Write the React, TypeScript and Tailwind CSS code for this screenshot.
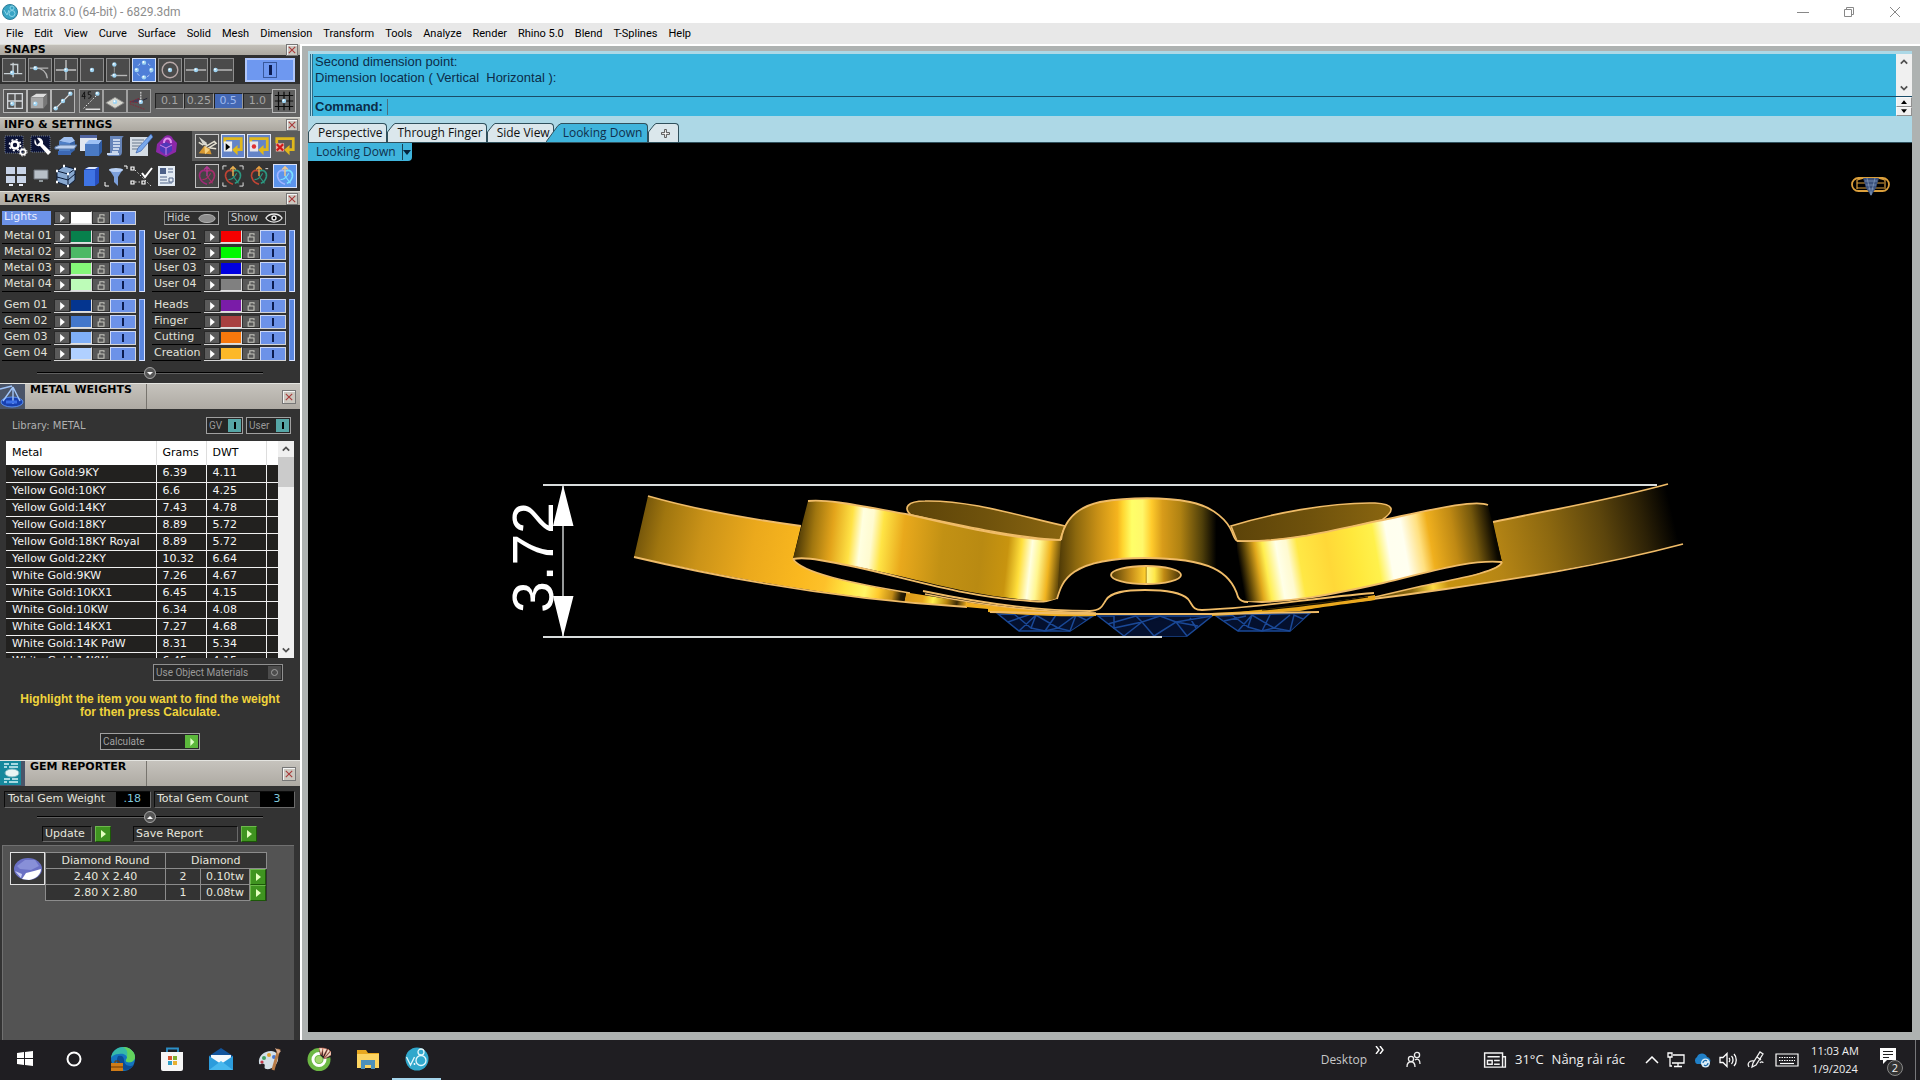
import { useState } from 'react'
import type { ReactNode } from 'react'

const MENUS = [
  'File', 'Edit', 'View', 'Curve', 'Surface', 'Solid', 'Mesh', 'Dimension', 'Transform', 'Tools',
  'Analyze', 'Render', 'Rhino 5.0', 'Blend', 'T-Splines', 'Help',
]

const METALS = [
  ['Yellow Gold:9KY', '6.39', '4.11'],
  ['Yellow Gold:10KY', '6.6', '4.25'],
  ['Yellow Gold:14KY', '7.43', '4.78'],
  ['Yellow Gold:18KY', '8.89', '5.72'],
  ['Yellow Gold:18KY Royal', '8.89', '5.72'],
  ['Yellow Gold:22KY', '10.32', '6.64'],
  ['White Gold:9KW', '7.26', '4.67'],
  ['White Gold:10KX1', '6.45', '4.15'],
  ['White Gold:10KW', '6.34', '4.08'],
  ['White Gold:14KX1', '7.27', '4.68'],
  ['White Gold:14K PdW', '8.31', '5.34'],
  ['White Gold:14KW', '6.45', '4.15'],
]

type LayerItem = { name: string; color: string }

const LAYERS: Record<'metal' | 'user' | 'gem' | 'parts', LayerItem[]> = {
  metal: [
    { name: 'Metal 01', color: 'bg-[#07804c]' },
    { name: 'Metal 02', color: 'bg-[#4cb965]' },
    { name: 'Metal 03', color: 'bg-[#84f878]' },
    { name: 'Metal 04', color: 'bg-[#bdfcb8]' },
  ],
  user: [
    { name: 'User 01', color: 'bg-[#f60000]' },
    { name: 'User 02', color: 'bg-[#00f800]' },
    { name: 'User 03', color: 'bg-[#0000e0]' },
    { name: 'User 04', color: 'bg-[#808080]' },
  ],
  gem: [
    { name: 'Gem 01', color: 'bg-[#04358f]' },
    { name: 'Gem 02', color: 'bg-[#4377cb]' },
    { name: 'Gem 03', color: 'bg-[#80b0f8]' },
    { name: 'Gem 04', color: 'bg-[#b0d0ff]' },
  ],
  parts: [
    { name: 'Heads', color: 'bg-[#7a1ca8]' },
    { name: 'Finger', color: 'bg-[#a84040]' },
    { name: 'Cutting', color: 'bg-[#f8780c]' },
    { name: 'Creation', color: 'bg-[#fcb828]' },
  ],
}

function Icon({ children, className = 'h-6 w-6' }: { children: ReactNode; className?: string }) {
  return (
    <svg viewBox="0 0 24 24" className={`shrink-0 ${className}`} fill="none" aria-hidden="true">
      {children}
    </svg>
  )
}

function Dot({ x, y }: { x: number; y: number }) {
  return (
    <g>
      <circle cx={x} cy={y} r="2.4" fill="#9fd4f2" />
      <circle cx={x - 0.6} cy={y - 0.7} r="1" fill="#fff" />
    </g>
  )
}

const SNAPS = [
  {
    label: 'Perpendicular',
    art: <><path d="M1 16h20M11 4v16M8 6h8v10" stroke="#c8d0d4" strokeWidth="1.5" /><Dot x={10} y={15} /></>,
  },
  {
    label: 'Tangent',
    art: <><path d="M1 10h20M7 10c7 0 12 4 13 11" stroke="#b4b4b4" strokeWidth="1.5" /><Dot x={7} y={10} /></>,
  },
  {
    label: 'Intersection',
    art: <><path d="M1 12h22M12 1v22" stroke="#c4c4c4" strokeWidth="1.5" /><Dot x={12} y={12} /></>,
  },
  { label: 'Point', art: <Dot x={12} y={12} /> },
  {
    label: 'Near',
    art: <><path d="M4 18h18" stroke="#b8b8b8" strokeWidth="1.5" /><path d="M8 9v6" stroke="#999" /><Dot x={8} y={6} /><Dot x={8} y={18} /></>,
  },
  {
    label: 'Quadrant',
    art: <><circle cx="12" cy="12" r="8" stroke="#c8d8f8" strokeDasharray="3 3" /><Dot x={12} y={4} /><Dot x={12} y={20} /><Dot x={4} y={12} /><Dot x={20} y={12} /></>,
  },
  {
    label: 'Center',
    art: <><circle cx="12" cy="12" r="8.500" stroke="#b8a8a8" strokeWidth="1.5" /><Dot x={12} y={12} /></>,
  },
  {
    label: 'Midpoint',
    art: <><path d="M1 12h22" stroke="#c4c4c4" strokeWidth="1.5" /><Dot x={12} y={12} /></>,
  },
  {
    label: 'End',
    art: <><path d="M4 12h19" stroke="#c4c4c4" strokeWidth="1.5" /><Dot x={5} y={12} /></>,
  },
]

const PLANE_SNAPS = [
  {
    label: 'Grid',
    art: <><path d="M4 4h16v16H4zM12 4v16M4 12h16" stroke="#d4d8dc" strokeWidth="1.4" /><Dot x={9} y={15} /></>,
  },
  {
    label: 'Surface',
    art: <><path d="M3 8l6-4h12l-4 4z" fill="#ddd" /><path d="M3 8h14v12H3z" fill="#a6a6a6" /><path d="M17 8l4-4v11l-4 5z" fill="#777" /><Dot x={8} y={15} /></>,
  },
  {
    label: 'Curve',
    art: <><path d="M4 20L20 4" stroke="#ddd" strokeWidth="1.4" /><Dot x={4} y={20} /><Dot x={12} y={12} /><Dot x={20} y={4} /></>,
  },
]

const ANGLE_SNAPS = [
  {
    label: 'Angle',
    art: (
      <>
        <path d="M4 20L19 5" stroke="#fff" strokeDasharray="1.5 2" />
        <path d="M6 21h16" stroke="#e8e8e8" strokeWidth="1.5" />
        <path d="M5 2L2 7h4M5 2v8M12 2H9v3c4-1 4 4 0 4" stroke="#111" />
        <Dot x={19} y={4} />
      </>
    ),
  },
  {
    label: 'Planar',
    art: <><path d="M2 14l10-6 10 6-10 6z" fill="#d8d8d0" stroke="#888" /><Dot x={12} y={13} /></>,
  },
  {
    label: 'Project',
    art: (
      <>
        <path d="M2 13l10-4v5zM2 15l16 6" fill="#404058" stroke="#852838" strokeDasharray="2 1" />
        <path d="M14 2v10" stroke="#fff" strokeDasharray="2 1" />
        <path d="M12 13l9-4" stroke="#202030" />
        <Dot x={14} y={13} />
      </>
    ),
  },
]

const INFO_TOP = [
  {
    label: 'Options',
    art: (
      <>
        <path d="M1 2h18v17H1z" fill="#0b1234" stroke="#8090b0" strokeWidth="0.8" strokeDasharray="1 1" />
        <circle cx="11" cy="11" r="3.500" stroke="#fff" strokeWidth="2.6" />
        <circle cx="11" cy="11" r="5.600" stroke="#fff" strokeWidth="1.6" strokeDasharray="2 2.4" />
        <circle cx="19" cy="18" r="2.600" stroke="#fff" strokeWidth="1.6" />
        <circle cx="19" cy="18" r="4" stroke="#fff" strokeWidth="1" strokeDasharray="1.6 1.6" />
      </>
    ),
  },
  {
    label: 'Tools',
    art: (
      <>
        <path d="M2 2h19v16H2z" fill="#0b1234" stroke="#8090b0" strokeWidth="0.8" strokeDasharray="1 1" />
        <path d="M6 5c-2 4 1 8 5 7l8 9 3-3-8-8c1-4-3-7-6-6l3 4-3 3z" fill="#fff" />
      </>
    ),
  },
  {
    label: 'Section',
    art: (
      <>
        <path d="M5 7l5-4h8l3 4-5 3z" fill="#a0c0f0" />
        <path d="M5 7l11 2v9H5z" fill="#4f80c8" />
        <path d="M16 9l5-2v9l-5 4z" fill="#3562a8" />
        <path d="M1 13l5-2h17l-3 4H1z" fill="#bcd0ee" stroke="#5878a8" />
        <path d="M4 17h13v4H4z" fill="#3c68b4" />
      </>
    ),
  },
  {
    label: 'Properties',
    art: (
      <>
        <path d="M1 1h17v16H1z" fill="#e0e6f0" />
        <path d="M1 1h17v3H1z" fill="#5064a0" />
        <path d="M6 10l4-4h13l-3 4z" fill="#9cc0f4" />
        <path d="M6 10h14v12H6z" fill="#4a7ac4" />
        <path d="M20 10l3-4v12l-3 4z" fill="#2f5ca4" />
      </>
    ),
  },
  {
    label: 'History',
    art: (
      <>
        <path d="M6 2h14c-2 1-2 2-2 4v12c0 3-2 4-4 4H3c2-1 3-2 3-4z" fill="#6684b8" />
        <path d="M9 6h7M9 9h7M9 12h7M9 15h6M8 18h6" stroke="#e8f0fc" strokeWidth="1.4" />
        <path d="M3 20h12" stroke="#c8d8f0" strokeWidth="2" />
      </>
    ),
  },
  {
    label: 'Notes',
    art: (
      <>
        <path d="M1 3h18v19H1z" fill="#d4dce4" />
        <path d="M3 6h12M3 9h10M3 12h8M3 15h6" stroke="#68788c" />
        <path d="M22 0l2 3L12 17l-5 2 2-5z" fill="#78a8ec" stroke="#2850a0" strokeWidth="0.6" />
      </>
    ),
  },
  {
    label: 'Materials',
    art: (
      <>
        <path d="M10 3c3-3 8-2 9 2l4 4-1 9-10 5-10-5 1-8z" fill="#8c28a8" />
        <path d="M6 11l6-3 6 3v6l-6 4-6-4z" fill="#5038b8" />
        <path d="M6 11l6 3 6-3M12 14v7" stroke="#d080e8" />
        <path d="M10 9c0-6 7-6 7 0" stroke="#e090f0" strokeWidth="2" />
      </>
    ),
  },
]

const INFO_BOTTOM = [
  {
    label: 'Viewports',
    art: <><path d="M2 3h9v7H2zM13 3h9v7h-9zM2 12h9v7H2zM13 12h9v7h-9z" fill="#c8d4e8" /><path d="M5 21h4M15 21h4" stroke="#e8ecf4" strokeWidth="2" /></>,
  },
  {
    label: 'Display',
    art: <><path d="M5 6h14v9H5z" fill="#b8c0c8" stroke="#6a7078" /><path d="M10 16h4v2h-4z" fill="#90989c" /></>,
  },
  {
    label: 'Bounding box',
    art: (
      <>
        <path d="M3 7l7-5 11 3v11l-7 6-11-4z" fill="#88a8d0" />
        <path d="M3 7l11 3 7-5M14 10v12M3 7v11M3 7l7-5 11 3v11l-7 6-11-4M3 13l11 3 7-6" stroke="#0c1c38" />
        <path d="M2 7h2M9 2h2M20 5h2M13 22h2M2 18h2M13 10h2" stroke="#fff" strokeWidth="2.4" />
      </>
    ),
  },
  {
    label: 'Library',
    art: <><path d="M5 6l4-3h11v16l-4 3H5z" fill="#274fc0" /><path d="M5 6h11v16H5z" fill="#3f74e4" /><path d="M6 5l4-2h9l-3 2z" fill="#dce8fc" /></>,
  },
  {
    label: 'Filter',
    art: (
      <>
        <path d="M5 5h14l-5 8v9l-4-4v-5z" fill="#7ca0dc" />
        <ellipse cx="12" cy="6" rx="7" ry="2" fill="#b8d0f4" />
        <path d="M20 2h3v3M1 18v4h4" stroke="#fff" />
      </>
    ),
  },
  {
    label: 'Points',
    art: (
      <>
        <path d="M2 3h3v3H2zM2 17h3v3H2zM13 17h3v3h-3z" stroke="#fff" strokeWidth="1.2" />
        <path d="M6 6l16 16M6 18h6" stroke="#ddd" strokeDasharray="1.5 2" />
        <path d="M13 9l3 4 7-9" stroke="#fff" strokeWidth="2" />
      </>
    ),
  },
  {
    label: 'Report',
    art: <><path d="M4 2h17v20H4z" fill="#e4ecf4" /><path d="M6 4h6v6H6z" fill="#4c6088" /><path d="M14 5h5M14 8h5M6 13h7M6 16h7M6 19h12M15 14h4v4h-4z" stroke="#54688c" /></>,
  },
]

function loopArt(mark: ReactNode) {
  return (
    <>
      <path d="M3 9V4h18v12h-6" stroke="#e0b81c" strokeWidth="3" />
      <path d="M17 11l-6 5 6 6z" fill="#e0b81c" />
      {mark}
    </>
  )
}

const REPORT_TOOLS = [
  {
    label: 'Wireframe wizard',
    box: 'border-[#c8c8c8] bg-[#4a4a4a]',
    art: (
      <>
        <path d="M3 2l8 6 2 4-5-1z" fill="#d8d8d0" />
        <path d="M3 8l5 3M10 13l10-6 2 2-8 5 8 1" stroke="#e4e0d0" strokeWidth="1.6" />
        <path d="M3 20l6-8 6 3 2 6z" fill="#d89830" />
        <path d="M9 12l6 4-5 5z" fill="#f4d080" />
      </>
    ),
  },
  { label: 'Play loop', box: 'border-[#e0e8f8] bg-[#6484c8]', art: loopArt(<><path d="M2 7h9v11H2z" fill="#eee" /><path d="M4 9l5 4-5 4z" fill="#000" /></>) },
  { label: 'Record loop', box: 'border-[#e0e8f8] bg-[#6484c8]', art: loopArt(<><path d="M2 7h9v11H2z" fill="#e4e4ec" /><circle cx="6.500" cy="12.500" r="2.400" fill="#e03030" /></>) },
  { label: 'Stop loop', box: 'border-transparent', art: loopArt(<><path d="M2 9h9v9H2z" fill="#e8b0a0" /><path d="M3 10l7 7M10 10l-7 7" stroke="#d01818" strokeWidth="2.4" /></>) },
]

function gumballArt(left: string, right: string, arrow: string) {
  return (
    <>
      <path d="M12 7c-5-3-9 1-8 6 1 4 4 7 8 8" stroke={left} strokeWidth="1.8" />
      <path d="M12 7c5-3 9 1 8 6-1 4-3 6-6 7" stroke={right} strokeWidth="1.8" />
      <path d="M7 16c4 0 7-3 9-7M12 12l6 8" stroke={right} strokeWidth="1.2" />
      <path d="M12 12V3M9 5l3-3 3 3" stroke={arrow} strokeWidth="1.6" />
    </>
  )
}

const GUMBALLS = [
  { label: 'Gumball', box: 'border-[#c0c0c0] bg-[#444]', art: gumballArt('#a02878', '#a82e6c', '#b03890') },
  { label: 'Gumball align', box: 'border-transparent', art: <>{gumballArt('#c04434', '#2c9880', '#e8b050')}<path d="M1 5V1h4M19 1h4v4M1 19v4h4M23 19v4h-4" stroke="#eee" /></> },
  { label: 'Gumball relocate', box: 'border-transparent', art: <>{gumballArt('#c04434', '#2c9880', '#e8a040')}<path d="M19 4h3" stroke="#eee" /></> },
  { label: 'Gumball auto', box: 'border-[#d8e0f8] bg-[#5c94ec]', art: gumballArt('#a0b4ff', '#7ce0ff', '#f0c890') },
]

function CloseBox({ large = false }: { large?: boolean }) {
  return (
    <button
      aria-label="Close panel"
      className={`flex shrink-0 items-center justify-center border border-[#777] bg-[#cbc7bf] shadow-[inset_1px_1px_0_#f4f4f4] ${large ? 'h-[14px] w-[14px]' : 'h-3 w-3'}`}
    >
      <svg viewBox="0 0 10 10" className="h-2 w-2" aria-hidden="true">
        <path d="M1 1l8 8M9 1l-8 8" stroke="#a83a3a" strokeWidth="1.4" />
      </svg>
    </button>
  )
}

function SmallHeader({ title, className = 'h-[14px]' }: { title: string; className?: string }) {
  return (
    <div className={`flex shrink-0 items-center justify-between border-t border-[#deded8] bg-gradient-to-b from-[#c2bfb8] to-[#aca8a0] pr-[2px] pl-1 ${className}`}>
      <h2 className="text-[11px] leading-3 font-bold text-black">{title}</h2>
      <CloseBox />
    </div>
  )
}

function LargeHeader({ title, icon }: { title: string; icon: ReactNode }) {
  return (
    <div className="flex h-[26px] shrink-0 border-t border-[#e4e4e0] bg-gradient-to-b from-[#c6c3bd] to-[#aeaaa3]">
      <div className="w-[25px] overflow-hidden bg-[#4a5468]">{icon}</div>
      <h2 className="w-[122px] border-r border-[#77746e] pl-[5px] text-[11px] leading-3 font-bold text-black">{title}</h2>
      <div className="flex flex-1 items-center justify-end pr-1">
        <CloseBox large />
      </div>
    </div>
  )
}

function ToolButton({ label, box = 'border-[#8f8f8f] bg-[#4b4b4b]', children }: { label: string; box?: string; children: ReactNode }) {
  return (
    <button
      aria-label={label}
      title={label}
      className={`flex h-6 w-6 shrink-0 items-center justify-center border ${box}`}
    >
      <Icon className="h-[22px] w-[22px]">{children}</Icon>
    </button>
  )
}

function GoButton({ label }: { label: string }) {
  return (
    <button aria-label={label} className="flex h-4 w-4 shrink-0 items-center justify-center border border-t-[#6cb84c] border-r-[#1c5808] border-b-[#1c5808] border-l-[#6cb84c] bg-[#3f9420]">
      <svg viewBox="0 0 10 10" className="h-[10px] w-[10px]" aria-hidden="true">
        <path d="M3 1l5 4-5 4z" fill="#e4ffc0" />
      </svg>
    </button>
  )
}

function LayerControls({ name, color }: LayerItem) {
  const [on, setOn] = useState(true)
  return (
    <div className="flex h-[14px] w-[82px] shrink-0 border-r border-b border-[#d4d4d4]">
      <button aria-label={`Select ${name}`} className="flex w-4 items-center justify-center border border-[#2a2a2a] bg-[#5a5a5a]">
        <svg viewBox="0 0 6 10" className="h-2 w-[5px]" aria-hidden="true">
          <path d="M0 0l6 5-6 5z" fill="#fff" />
        </svg>
      </button>
      <button aria-label={`${name} color`} className={`w-[22px] border border-t-[#333] border-r-[#e0e0e0] border-b-[#e0e0e0] border-l-[#333] ${color}`} />
      <button aria-label={`Lock ${name}`} className="flex w-[18px] items-center justify-center border border-[#303030] bg-[#585858]">
        <svg viewBox="0 0 10 12" className="h-[10px] w-[9px]" fill="none" aria-hidden="true">
          <path d="M1 6h7v5H1zM3 6V2h5v2" stroke="#c4c4bc" strokeWidth="1.3" />
        </svg>
      </button>
      <button
        aria-label={`Toggle ${name}`}
        aria-pressed={on}
        onClick={() => setOn(!on)}
        className={`flex flex-1 items-center justify-center border-t border-l border-[#cdd8f4] ${on ? 'bg-[#6c92e8]' : 'bg-[#555]'}`}
      >
        <span className="h-2 w-[2px] bg-[#0c1c50]" />
      </button>
    </div>
  )
}

function LayerGroup({ items }: { items: LayerItem[] }) {
  return (
    <div className="flex gap-[3px]">
      <div className="flex flex-col gap-[2px]">
        {items.map((layer) => (
          <div key={layer.name} className="flex h-[14px] gap-[3px]">
            <span className="w-[49px] border-b border-black pl-[2px] text-[11px] leading-3 whitespace-nowrap text-[#e2e2da]">{layer.name}</span>
            <LayerControls {...layer} />
          </div>
        ))}
      </div>
      <button aria-label={`Toggle ${items[0].name} group`} className="w-[6px] border border-t-[#a9c0f8] border-r-[#dde6ff] border-b-[#dde6ff] border-l-[#8aa8ee] bg-[#5a86e0]" />
    </div>
  )
}

function Expander({ up = false }: { up?: boolean }) {
  return (
    <div className="mx-[37px] flex h-3 items-center">
      <span className="h-[2px] flex-1 border-b border-[#606060] bg-black" />
      <button aria-label={up ? 'Collapse' : 'Expand'} className="flex h-3 w-3 items-center justify-center rounded-full border border-[#a8a8a8] bg-[#555]">
        <svg viewBox="0 0 8 6" className="h-[5px] w-[6px]" aria-hidden="true">
          <path d={up ? 'M0 5l4-4 4 4z' : 'M0 1l4 4 4-4z'} fill="#fff" />
        </svg>
      </button>
      <span className="h-[2px] flex-1 border-b border-[#606060] bg-black" />
    </div>
  )
}

function Snaps() {
  const [step, setStep] = useState('0.5')
  return (
    <section>
      <SmallHeader title="SNAPS" className="h-[11px]" />
      <div className="flex h-[29px] items-center justify-between bg-[#303030] pr-[5px] pl-[2px]">
        <div className="flex gap-[2px]">
          {SNAPS.map((s) => (
            <ToolButton key={s.label} label={s.label} box={s.label === 'Quadrant' ? 'border-[#d4e0f8] bg-[#4f7fd8]' : undefined}>
              {s.art}
            </ToolButton>
          ))}
        </div>
        <button aria-label="Toggle snaps" className="flex h-6 w-[50px] items-center justify-center border-2 border-[#b0c6fa] bg-[#6e98f0]">
          <span className="flex h-4 w-[14px] items-center justify-center border border-[#38589c]">
            <span className="h-[10px] w-[3px] bg-[#0c1c50]" />
          </span>
        </button>
      </div>
      <div className="flex h-[33px] items-center gap-1 bg-[#646464] px-1 pl-[3px]">
        <div className="flex">
          {PLANE_SNAPS.map((s) => (
            <ToolButton key={s.label} label={s.label} box="border-[#b4b4b4] bg-[#555]">{s.art}</ToolButton>
          ))}
        </div>
        <div className="flex">
          {ANGLE_SNAPS.map((s) => (
            <ToolButton key={s.label} label={s.label} box="border-[#a0a0a0] bg-[#555]">{s.art}</ToolButton>
          ))}
        </div>
        <div className="flex flex-1 items-center">
          {['0.1', '0.25', '0.5', '1.0'].map((v) => (
            <button
              key={v}
              onClick={() => setStep(v)}
              className={`h-4 flex-1 border border-t-[#222] border-r-[#999] border-b-[#999] border-l-[#222] text-[11px] leading-3 ${v === step ? 'bg-[#4468b4] text-[#9db8ee]' : 'bg-[#4e4e4e] text-[#a4a4a4]'}`}
            >
              {v}
            </button>
          ))}
          <ToolButton label="Grid snap" box="border-[#b8b8b8] bg-[#606060]">
            <path d="M6 2v20M12 2v20M18 2v20M2 6h20M2 12h20M2 18h20" stroke="#0a0a0a" strokeWidth="1.3" />
            <Dot x={12} y={12} />
          </ToolButton>
        </div>
      </div>
    </section>
  )
}

function InfoSettings() {
  return (
    <section>
      <SmallHeader title="INFO & SETTINGS" />
      <div className="flex h-[60px] justify-between">
        <div className="flex flex-col justify-around pl-1">
          {[INFO_TOP, INFO_BOTTOM].map((row, i) => (
            <div key={i} className="flex gap-px">
              {row.map((t) => (
                <button key={t.label} aria-label={t.label} className="h-6 w-6"><Icon>{t.art}</Icon></button>
              ))}
            </div>
          ))}
        </div>
        <div className="flex w-[108px] flex-col">
          <div className="flex flex-1 items-center justify-between bg-[#5c5c5c] px-[3px]">
            {REPORT_TOOLS.map((t) => <ToolButton key={t.label} label={t.label} box={t.box}>{t.art}</ToolButton>)}
          </div>
          <div className="flex flex-1 items-center justify-between px-[3px]">
            {GUMBALLS.map((t) => <ToolButton key={t.label} label={t.label} box={t.box}>{t.art}</ToolButton>)}
          </div>
        </div>
      </div>
    </section>
  )
}

const raised = 'border border-t-[#888] border-r-[#aaa] border-b-[#aaa] border-l-[#888] bg-[#2e2e2e]'

function Layers() {
  return (
    <section>
      <SmallHeader title="LAYERS" />
      <div className="flex flex-col pt-[6px] pl-[2px]">
        <div className="flex h-[14px] items-start">
          <div className="flex w-[162px] gap-[3px]">
            <span className="w-[49px] bg-[#6c92e8] pl-[2px] text-[11px] leading-3 text-[#e8ecff]">Lights</span>
            <LayerControls name="Lights" color="bg-white" />
          </div>
          <button className={`flex h-[14px] w-[55px] items-center justify-between px-[2px] text-[10px] leading-3 text-[#ccc] ${raised}`}>
            Hide
            <svg viewBox="0 0 20 10" className="h-[9px] w-[18px]" aria-hidden="true">
              <ellipse cx="10" cy="5" rx="9" ry="4.5" fill="#8c8c8c" stroke="#bbb" />
            </svg>
          </button>
          <button className={`ml-[9px] flex h-[14px] w-[58px] items-center justify-between px-[2px] text-[10px] leading-3 text-[#ccc] ${raised}`}>
            Show
            <svg viewBox="0 0 20 10" className="h-[10px] w-[18px]" aria-hidden="true">
              <path d="M1 5c4-6 14-6 18 0-4 6-14 6-18 0z" fill="#222" stroke="#e8e8e8" strokeWidth="1.5" />
              <circle cx="10" cy="5" r="3" fill="#eee" />
              <circle cx="10" cy="5" r="1.4" fill="#000" />
            </svg>
          </button>
        </div>
        <div className="mt-[5px] flex gap-[7px]">
          <LayerGroup items={LAYERS.metal} />
          <LayerGroup items={LAYERS.user} />
        </div>
        <div className="mt-[7px] flex gap-[7px]">
          <LayerGroup items={LAYERS.gem} />
          <LayerGroup items={LAYERS.parts} />
        </div>
      </div>
      <div className="pt-[6px] pb-1"><Expander /></div>
    </section>
  )
}

function LibrarySwitch({ label, className }: { label: string; className: string }) {
  return (
    <button className={`flex h-[17px] items-center justify-between border border-[#a0a0a0] bg-[#262626] pr-px pl-[2px] font-[Roboto,sans-serif] text-[10px] text-[#9a9a9a] ${className}`}>
      {label}
      <span className="flex h-[13px] w-[13px] items-center justify-center bg-[#56a6a6]">
        <span className="h-[7px] w-[2px] bg-black" />
      </span>
    </button>
  )
}

function ScrollArrow({ up = false }: { up?: boolean }) {
  return (
    <button aria-label={up ? 'Scroll up' : 'Scroll down'} className="flex h-4 w-full items-center justify-center">
      <svg viewBox="0 0 10 10" className="h-2 w-2" fill="none" aria-hidden="true">
        <path d={up ? 'M1 7l4-4 4 4' : 'M1 3l4 4 4-4'} stroke="#505050" strokeWidth="2.2" />
      </svg>
    </button>
  )
}

function MetalWeights() {
  return (
    <section>
      <LargeHeader
        title="METAL WEIGHTS"
        icon={
          <svg viewBox="0 0 25 25" className="h-[25px] w-[25px]" fill="none" aria-hidden="true">
            <ellipse cx="12" cy="18" rx="11" ry="5" fill="#1840b0" stroke="#5a90f0" />
            <path d="M0 5l12-3M13 3L3 17M13 3l7 14M13 3v17" stroke="#a0c4f8" strokeWidth="1.4" />
            <path d="M6 18h11" stroke="#3c70e8" strokeWidth="3" />
          </svg>
        }
      />
      <div className="flex h-8 items-center justify-between pr-[9px] pl-3">
        <span className="text-[10px] text-[#b0b0b0]">Library: METAL</span>
        <div className="flex gap-[3px]">
          <LibrarySwitch label="GV" className="w-[37px]" />
          <LibrarySwitch label="User" className="w-[45px]" />
        </div>
      </div>
      <div className="mr-[6px] ml-[6px] flex h-[217px] overflow-hidden bg-[#22211f]">
        <div className="flex-1 overflow-hidden">
          <table className="w-full table-fixed border-collapse text-left text-[11px] leading-4">
            <colgroup>
              <col className="w-[150px]" />
              <col className="w-[50px]" />
              <col className="w-[60px]" />
              <col />
            </colgroup>
            <thead>
              <tr className="h-6 bg-white text-black">
                <th className="border-r border-[#ddd] pl-[6px] font-normal">Metal</th>
                <th className="border-r border-[#ddd] pl-[6px] font-normal">Grams</th>
                <th className="border-r border-[#ddd] pl-[6px] font-normal">DWT</th>
                <th />
              </tr>
            </thead>
            <tbody>
              {METALS.map(([name, grams, dwt]) => (
                <tr key={name} className="h-[17px] border-b border-[#f0f0f0] text-[#f4f4f4]">
                  <td className="border-r border-[#f0f0f0] pl-[6px] whitespace-nowrap">{name}</td>
                  <td className="border-r border-[#f0f0f0] pl-[6px]">{grams}</td>
                  <td className="border-r border-[#f0f0f0] pl-[6px]">{dwt}</td>
                  <td />
                </tr>
              ))}
            </tbody>
          </table>
        </div>
        <div className="flex w-4 flex-col bg-[#f0f0f0]">
          <ScrollArrow up />
          <div className="h-[30px] bg-[#cbcbcb]" />
          <div className="flex-1" />
          <ScrollArrow />
        </div>
      </div>
      <div className="flex flex-col px-[17px] pt-[6px] pb-[10px]">
        <button className="flex h-[17px] w-[130px] items-center justify-between self-end border border-[#909090] bg-[#2a2a2a] pr-px pl-[2px] font-[Roboto,sans-serif] text-[10px] text-[#9a9a9a]">
          Use Object Materials
          <span className="flex h-[13px] w-[13px] items-center justify-center bg-[#4c4c4c]">
            <span className="h-[7px] w-[7px] rounded-full border border-[#a0a0a0]" />
          </span>
        </button>
        <p className="-mx-2 mt-3 text-center font-['Liberation_Sans',sans-serif] text-[12px] leading-[13px] font-bold text-[#f0d43c]">
          Highlight the item you want to find the weight
          <br />
          for then press Calculate.
        </p>
        <button className="mt-[14px] flex h-[17px] w-[100px] items-center justify-between self-center border border-[#a0a0a0] bg-[#262626] pr-px pl-[2px] font-[Roboto,sans-serif] text-[10px] text-[#a0a0a0]">
          Calculate
          <span className="flex h-[13px] w-[13px] items-center justify-center bg-[#5cb83c]">
            <svg viewBox="0 0 10 10" className="h-2 w-2" aria-hidden="true"><path d="M3 0l5 5-5 5z" fill="#dfffc8" /></svg>
          </span>
        </button>
      </div>
    </section>
  )
}

const sunk = 'border border-t-[#0c0c0c] border-r-[#6a6a6a] border-b-[#6a6a6a] border-l-[#0c0c0c]'

function GemReporter() {
  const gems = [
    ['2.40 X 2.40', '2', '0.10tw'],
    ['2.80 X 2.80', '1', '0.08tw'],
  ]
  return (
    <section className="flex min-h-0 flex-1 flex-col">
      <LargeHeader
        title="GEM REPORTER"
        icon={
          <svg viewBox="0 0 25 25" className="h-[25px] w-[25px]" fill="none" aria-hidden="true">
            <path d="M0 0h21v24H0z" fill="#16889c" />
            <path d="M4 3h5M11 3h7M4 6h3M9 6h9M4 18h6M12 18h6M4 21h3M9 21h9" stroke="#d8f4f8" strokeWidth="1.5" />
            <ellipse cx="12" cy="12" rx="7" ry="4" fill="#e8f4f4" stroke="#70b0bc" />
          </svg>
        }
      />
      <div className="flex gap-[3px] pt-[5px] pr-[5px] pl-1 text-[11px] leading-[14px] text-[#e6e6de]">
        <div className={`flex h-[17px] flex-1 ${sunk}`}>
          <span className="flex-1 pl-[3px] whitespace-nowrap">Total Gem Weight</span>
          <span className="w-[34px] bg-black pr-[9px] text-right text-[#80c8dc]">.18</span>
        </div>
        <div className={`flex h-[17px] w-[141px] ${sunk}`}>
          <span className="flex-1 pl-[2px] whitespace-nowrap">Total Gem Count</span>
          <span className="w-[34px] bg-black text-center text-[#80c8dc]">3</span>
        </div>
      </div>
      <div className="pt-[3px]"><Expander up /></div>
      <div className="flex items-center gap-[22px] pt-[3px] pb-[3px] pl-[42px] text-[11px] leading-[14px] text-[#e6e6de]">
        <div className="flex items-center gap-[3px]">
          <span className={`h-4 w-[50px] pl-[2px] ${sunk}`}>Update</span>
          <GoButton label="Update" />
        </div>
        <div className="flex items-center gap-[3px]">
          <span className={`h-4 w-[105px] pl-[2px] ${sunk}`}>Save Report</span>
          <GoButton label="Save report" />
        </div>
      </div>
      <div className="mr-[6px] ml-[2px] flex flex-1 items-start border-t border-l border-[#707070] bg-[#535353] pt-[6px] pl-[7px]">
        <div className="flex h-[33px] w-[35px] shrink-0 items-center justify-center border border-[#e0e0e0] bg-[#383838]">
          <svg viewBox="0 0 32 28" className="h-7 w-8" aria-hidden="true">
            <ellipse cx="16" cy="14" rx="14" ry="11" fill="#6a70c4" />
            <path d="M5 11l8-6 10 0 4 6-8 4-11-1z" fill="#8890d8" />
            <path d="M10 24l4-6 8-2 7-2c0 6-6 10-12 11z" fill="#fff" />
            <path d="M3 16l7 3-1 4z" fill="#c8ccf4" />
          </svg>
        </div>
        <table className="border-collapse bg-[#333] text-center text-[11px] leading-[14px] text-[#e6e6de]">
          <thead>
            <tr className="h-4">
              <th className="w-[120px] border border-[#8c8c8c] p-0 font-normal">Diamond Round</th>
              <th colSpan={3} className="border border-[#8c8c8c] p-0 font-normal">Diamond</th>
            </tr>
          </thead>
          <tbody>
            {gems.map(([size, count, weight]) => (
              <tr key={size} className="h-4">
                <td className="border border-[#8c8c8c] p-0">{size}</td>
                <td className="w-[35px] border border-[#8c8c8c] p-0">{count}</td>
                <td className="w-[49px] border border-[#8c8c8c] p-0">{weight}</td>
                <td className="h-4 w-4 p-0"><div className="-my-px flex"><GoButton label={`Select ${size}`} /></div></td>
              </tr>
            ))}
          </tbody>
        </table>
      </div>
    </section>
  )
}

function CommandArea() {
  return (
    <div className="flex h-[62px] bg-[#3bb7e0] text-[#0c2c48]">
      <div className="mr-px w-[3px] border-r border-l border-[#2c6c88] bg-[#a8d8e8]" />
      <div className="flex flex-1 flex-col font-['Liberation_Sans',sans-serif] text-[13px]">
        <div className="h-[43px] border-b border-[#1a4c68] pl-px leading-4 whitespace-pre">
          {'Second dimension point:\nDimension location ( Vertical  Horizontal ):'}
        </div>
        <div className="flex flex-1 items-center pl-px leading-4">
          <label htmlFor="command" className="font-bold">Command:</label>
          <input id="command" className="ml-1 h-4 flex-1 border-l border-[#4a7080] bg-transparent pl-1 outline-none" />
        </div>
      </div>
      <div className="flex w-4 flex-col bg-[#f0f0f0]">
        <div className="flex h-[43px] flex-col justify-between border-b border-[#1a4c68]">
          <ScrollArrow up />
          <ScrollArrow />
        </div>
        {[true, false].map((up) => (
          <button key={String(up)} aria-label={up ? 'Previous' : 'Next'} className="flex flex-1 items-center justify-center border border-t-[#f8f8f8] border-r-[#909090] border-b-[#909090] border-l-[#f8f8f8]">
            <svg viewBox="0 0 8 5" className="h-1 w-[6px]" aria-hidden="true">
              <path d={up ? 'M0 5l4-5 4 5z' : 'M0 0l4 5 4-5z'} fill="#000" />
            </svg>
          </button>
        ))}
      </div>
    </div>
  )
}

function ViewTab({ label, active = false, className = '', onClick }: { label: ReactNode; active?: boolean; className?: string; onClick?: () => void }) {
  const fill = active ? '#3fb4dc' : '#dbe7ec'
  return (
    <button onClick={onClick} className={`flex h-[19px] items-stretch text-[12px] leading-4 whitespace-nowrap ${active ? 'text-[#10304c]' : 'text-[#101010]'}`}>
      <svg viewBox={active ? '0 0 15 19' : '0 0 8 19'} className={active ? 'z-10 -ml-2 h-[19px] w-[15px] shrink-0' : 'h-[19px] w-2 shrink-0'} fill="none" aria-hidden="true">
        {active ? (
          <>
            <path d="M0 19L12 2.500 15 .5V19z" fill={fill} />
            <path d="M0 19L12 2.500 15 .5" stroke="#30505c" />
          </>
        ) : (
          <>
            <path d="M.5 19V9L6 2l2-1.500V19" fill={fill} />
            <path d="M.5 19V9L6 2l2-1.500" stroke="#30505c" />
          </>
        )}
      </svg>
      <span className={`rounded-tr-[4px] border-t border-r border-[#30505c] pt-px ${active ? 'bg-[#3fb4dc]' : 'bg-[#dbe7ec]'} ${className}`}>{label}</span>
    </button>
  )
}

const GOLD_EDGE = '#f0bc68'

function Stops({ list }: { list: [number, string][] }) {
  return (
    <>
      {list.map(([at, color]) => (
        <stop key={at} offset={at} stopColor={color} />
      ))}
    </>
  )
}

function RingModel() {
  return (
    <svg viewBox="308 143 1604 889" className="h-full w-full" fill="none" role="img" aria-label="Ring model, looking down">
      <defs>
        <linearGradient id="backLeft" gradientUnits="userSpaceOnUse" x1="636" y1="520" x2="970" y2="590">
          <Stops list={[[0, '#6b4f0a'], [0.08, '#a0760f'], [0.2, '#cb9318'], [0.35, '#eba91c'], [0.5, '#fab81f'], [0.58, '#fdc12a'], [0.64, '#ffe440'], [0.7, '#fff566'], [0.74, '#ffc92c'], [0.78, '#c08a16'], [0.805, '#2a1f04'], [0.818, '#1c1402'], [0.82, '#d8981a'], [0.87, '#e8a81e'], [0.9, '#fff04c'], [0.94, '#b8860f'], [0.97, '#3c2c06'], [1, '#f5b21e']]} />
        </linearGradient>
        <linearGradient id="midLeft" gradientUnits="userSpaceOnUse" x1="798" y1="530" x2="1060" y2="558">
          <Stops list={[[0, '#4e3a06'], [0.06, '#a0760f'], [0.13, '#e3a41b'], [0.2, '#ffe245'], [0.24, '#ffffe0'], [0.28, '#fffbd0'], [0.32, '#ffe445'], [0.4, '#e9a91c'], [0.55, '#c29114'], [0.7, '#b98a12'], [0.8, '#c8940f'], [0.85, '#ffdf3c'], [0.89, '#ffffe0'], [0.92, '#fff690'], [0.96, '#f0b420'], [1, '#6d510b']]} />
        </linearGradient>
        <linearGradient id="center" gradientUnits="userSpaceOnUse" x1="1058" y1="0" x2="1238" y2="0">
          <Stops list={[[0, '#4c3806'], [0.1, '#8c680e'], [0.22, '#c89016'], [0.33, '#f5b41e'], [0.36, '#ffd630'], [0.41, '#ffff68'], [0.47, '#fff86a'], [0.52, '#ffcb2c'], [0.58, '#d89c1a'], [0.68, '#b08212'], [0.8, '#50400a'], [0.88, '#000'], [1, '#000']]} />
        </linearGradient>
        <linearGradient id="midRight" gradientUnits="userSpaceOnUse" x1="1240" y1="570" x2="1500" y2="525">
          <Stops list={[[0, '#000'], [0.03, '#604808'], [0.07, '#e0a81c'], [0.1, '#ffee50'], [0.15, '#ffffe8'], [0.19, '#fffad0'], [0.23, '#ffe845'], [0.34, '#ffd838'], [0.44, '#ffe83c'], [0.52, '#fff14c'], [0.57, '#ffffef'], [0.63, '#fffff0'], [0.69, '#ffe080'], [0.73, '#f0b01e'], [0.82, '#c08a14'], [0.9, '#75580c'], [0.97, '#0c0900'], [1, '#000']]} />
        </linearGradient>
        <linearGradient id="backRight" gradientUnits="userSpaceOnUse" x1="1380" y1="590" x2="1680" y2="520">
          <Stops list={[[0, '#604808'], [0.1, '#8c6a10'], [0.17, '#ffdc44'], [0.22, '#c8930f'], [0.4, '#b58515'], [0.58, '#8c6810'], [0.75, '#5c450c'], [0.88, '#2c2106'], [0.98, '#000'], [1, '#000']]} />
        </linearGradient>
        <linearGradient id="hole" gradientUnits="userSpaceOnUse" x1="1110" y1="0" x2="1182" y2="0">
          <Stops list={[[0, '#4c3806'], [0.3, '#c8901a'], [0.49, '#ffd030'], [0.5, '#a88010'], [0.52, '#fff58a'], [0.62, '#ffe84a'], [0.75, '#c08a14'], [1, '#3c2c06']]} />
        </linearGradient>
        <linearGradient id="inner" x1="0" y1="0" x2="1" y2="0">
          <Stops list={[[0, '#5c4309'], [0.5, '#6f520c'], [1, '#8a6610']]} />
        </linearGradient>
      </defs>

      {/* pavilion of the three stones */}
      <g fill="#04102e" stroke="#1a4896" strokeWidth="1.5">
        <path d="M998 614L1019 631H1070L1093 616Z" />
        <path d="M1008 622L1031 614M1014 614L1031 628L1036 615L1058 628L1076 615M1019 631L1036 615M1045 631L1056 615M1070 631L1076 615L1086 620M1031 628L1045 631L1058 628L1070 631" />
        <path d="M1216 616L1238 631H1290L1310 613Z" />
        <path d="M1224 621L1246 616M1232 615L1248 627L1252 615L1274 628L1290 615M1238 631L1252 615M1262 631L1270 615M1290 631L1294 615L1303 619M1248 627L1262 631L1274 628L1290 631" />
        <path d="M1098 616L1124 636H1187L1212 616Z" />
        <path d="M1108 624L1136 616M1114 616V628L1142 622L1136 616M1142 622L1160 616L1176 622L1212 616M1124 636L1142 622L1154 636L1176 622L1187 636M1196 628L1190 618M1176 622L1198 626" />
      </g>

      {/* shank behind the settings */}
      <path d="M648 496C700 511 750 519 801 526L793 559C830 580 880 589 910 593L967 602V607C850 600 740 580 634 557Z" fill="url(#backLeft)" />
      <path d="M648 496C700 511 750 519 801 526M634 557C740 582 850 600 967 607" stroke={GOLD_EDGE} strokeWidth="1.8" />
      <path d="M1493 522C1560 508 1610 500 1668 484L1683 544C1600 564 1520 578 1446 589C1380 598 1300 608 1240 612L1375 596L1422 586L1502 563Z" fill="url(#backRight)" />
      <path d="M1493 522C1560 508 1610 500 1668 484M1683 544C1600 566 1520 578 1446 589S1300 608 1240 613" stroke={GOLD_EDGE} strokeWidth="1.8" />

      {/* oval openings */}
      <path d="M911 515C903 508 907 501 925 501C970 500 1020 516 1065 526L1060 540C1010 537 960 525 911 515Z" fill="url(#inner)" stroke={GOLD_EDGE} strokeWidth="1.6" />
      <path d="M1231 526C1270 514 1330 502 1375 503C1394 504 1396 510 1382 520C1340 530 1280 544 1237 541Z" fill="url(#inner)" stroke={GOLD_EDGE} strokeWidth="1.6" />

      {/* undersides of the side settings */}
      <path d="M793 559C800 572 850 584 910 592L1090 612L1120 560L1060 600L1000 596L836 558Z" fill="#000" />
      <path d="M793 559C802 573 850 583 910 593" stroke={GOLD_EDGE} strokeWidth="1.6" />
      <path d="M1244 602L1502 562C1495 572 1460 578 1422 586L1375 597L1244 608Z" fill="#000" />
      <path d="M1502 562C1500 572 1450 580 1422 586L1375 597" stroke={GOLD_EDGE} strokeWidth="1.6" />

      {/* thin gallery wires under the settings */}
      <path d="M966 602C1000 607 1050 612 1096 613V616C1060 617 1020 615 988 612V609L966 607Z" fill="#f0ae20" />
      <path d="M925 594C975 604 1030 612 1096 613" stroke={GOLD_EDGE} strokeWidth="1.6" />
      <path d="M1212 613C1270 611 1330 603 1375 595V600C1340 605 1320 607 1300 611L1212 616Z" fill="#eaa81e" />
      <path d="M1262 610C1300 607 1340 601 1368 597" stroke="#1a1202" strokeWidth="1.2" />

      {/* side and centre settings */}
      <path d="M808 501C830 499 860 506 911 515C970 529 1020 540 1061 540L1066 575L1057 599C1052 602 1045 601 1030 600C960 595 900 573 836 563C815 559 803 557 793 559Z" fill="url(#midLeft)" />
      <path d="M808 501C830 499 860 506 911 515C970 529 1020 540 1061 540M793 559C803 557 815 559 836 563C900 575 960 597 1030 601C1045 602 1052 602 1057 599" stroke={GOLD_EDGE} strokeWidth="1.8" />
      <path d="M1237 541C1290 543 1340 528 1383 520C1430 510 1475 499 1488 505L1502 562C1470 559 1430 572 1383 583C1330 595 1290 603 1244 602L1230 580Z" fill="url(#midRight)" />
      <path d="M1237 541C1290 543 1340 528 1383 520C1430 510 1475 499 1488 505M1244 602C1290 603 1330 595 1383 583C1430 572 1470 559 1502 562" stroke={GOLD_EDGE} strokeWidth="1.8" />
      <path d="M1061 540C1064 520 1078 507 1100 502C1130 497 1165 497 1190 502C1215 507 1228 522 1232 532L1237 541V597C1230 570 1205 558 1145 558C1090 558 1066 575 1061 590L1057 599Z" fill="url(#center)" />
      <path d="M1057 599C1064 575 1075 558 1145 558C1205 558 1230 570 1238 597C1240 601 1243 602 1248 602L1262 603L1240 609L1090 612L1040 604Z" fill="#000" />
      <path d="M1061 540C1064 520 1078 507 1100 502C1130 497 1165 497 1190 502C1215 507 1228 522 1232 532C1234 537 1235 540 1237 541M1057 599C1062 582 1068 558 1145 558C1210 558 1231 572 1238 597C1240 601 1243 602 1248 602" stroke={GOLD_EDGE} strokeWidth="1.8" />
      <ellipse cx="1146" cy="575" rx="35" ry="9" fill="url(#hole)" stroke={GOLD_EDGE} strokeWidth="1.8" />
      <path d="M923 591C980 603 1040 611 1090 611C1102 610 1102 606 1106 600C1111 592 1125 590 1145 590C1170 590 1182 593 1188 599C1193 605 1192 610 1202 610C1260 608 1310 598 1374 593M990 612L1098 614H1210L1319 612" stroke={GOLD_EDGE} strokeWidth="1.8" />

      {/* overall height dimension */}
      <path d="M543 485H1657M543 637H1162" stroke="#d8dcdc" strokeWidth="2" />
      <path d="M563 485V637" stroke="#d8dcdc" strokeWidth="1.4" />
      <path d="M563 485L573.500 526H553ZM563 637L573.500 596H553Z" fill="#fff" />
      <text transform="translate(553 613) rotate(-90)" className="font-['Liberation_Sans',sans-serif] text-[57px]" fill="#fff">3.72</text>

      {/* orientation ring */}
      <g stroke="#dca03c" strokeWidth="1.8">
        <rect x="1852" y="178" width="37" height="13" rx="6.500" />
        <path d="M1857 180c8-3 20-3 28 0M1857 183h27M1857 188h27M1857 180v9M1885 180v9" strokeWidth="1.2" />
      </g>
      <path d="M1863 178h16l-3 10-5 8-5-8z" fill="#3c527c" />
      <path d="M1865 181h12M1866 185h10M1868 189h6M1867 178l4 17 4-17" stroke="#7c94b8" strokeWidth="0.8" />
    </svg>
  )
}

function Workspace() {
  const [view, setView] = useState('Looking Down')
  return (
    <main className="flex min-w-0 flex-1 flex-col border-t-2 border-l-2 border-white bg-[#aeb2b1] pt-[5px] pr-2 pb-2 pl-[6px] font-['Open_Sans',sans-serif]">
      <div className="bg-[#add8e6] pt-[3px] pl-[2px]">
        <CommandArea />
        <div className="-ml-[2px] flex pt-[7px]" role="group" aria-label="Viewports">
          <ViewTab label="Perspective" className="pr-1 pl-[2px]" onClick={() => setView('Perspective')} />
          <ViewTab label="Through Finger" className="pr-[3px] pl-[2px]" onClick={() => setView('Through Finger')} />
          <ViewTab label="Side View" className="pr-[3px] pl-[2px]" onClick={() => setView('Side View')} />
          <ViewTab label="Looking Down" active className="pr-[5px] pl-[2px]" onClick={() => setView('Looking Down')} />
          <ViewTab
            className="flex items-center pr-2 pl-[5px]"
            label={
              <svg viewBox="0 0 10 10" className="h-[9px] w-[9px]" aria-label="New viewport">
                <path d="M4 .5h2V4h3.500v2H6v3.500H4V6H.5V4H4z" fill="#fff" stroke="#444" />
              </svg>
            }
          />
        </div>
      </div>
      <div className="relative min-h-0 flex-1 border-t border-[#30505c] bg-black">
        <RingModel />
        <button className="absolute top-0 left-0 flex h-[18px] items-center rounded-br bg-[#3fb4dc] pl-2 text-[12px] leading-4 text-[#10304c]">
          {view}
          <span className="ml-[6px] flex h-4 w-[10px] items-center justify-center border-l border-[#1a4050]">
            <svg viewBox="0 0 8 5" className="h-[5px] w-2" aria-hidden="true"><path d="M0 0h8L4 5z" fill="#04243c" /></svg>
          </span>
        </button>
      </div>
    </main>
  )
}

const TASKS = [
  { label: 'Start', art: <path d="M4 6l7-1v6H4zM12 5l8-1v7h-8zM4 12h7v6l-7-1zM12 12h8v7l-8-1z" fill="#fff" /> },
  { label: 'Cortana', art: <circle cx="12" cy="12" r="6.500" stroke="#fff" strokeWidth="2" /> },
  {
    label: 'Edge',
    art: (
      <>
        <circle cx="12" cy="12" r="12" fill="#1474c0" />
        <path d="M0 11C1 4 6 0 12 0c7 0 12 5 12 10 0 4-4 6-8 5-2-1-1-2 0-4 0-3-4-5-8-4-4 0-7 2-8 4z" fill="#36b9a8" />
        <path d="M12 0c7 0 12 5 12 10 0 4-4 6-8 5-2-1-1-2 0-4 0-3 2-8-4-11z" fill="#62d35c" />
        <path d="M7 9c-3 6 0 13 7 14 4 0 7-2 9-5-4 2-10 1-10-5 0-4-3-5-6-4z" fill="#0c4c94" />
        <path d="M0 16h12v8H0z" fill="#d07c18" />
        <path d="M4 16v-2h4v2M0 20h12" stroke="#6c3804" />
      </>
    ),
  },
  {
    label: 'Store',
    art: (
      <>
        <path d="M7 6V1.500h11V6" stroke="#2c90c8" strokeWidth="1.8" />
        <path d="M1 5h22v17a2 2 0 01-2 2H3a2 2 0 01-2-2z" fill="#f6f6f6" />
        <path d="M8 9h4v4H8z" fill="#d85430" /><path d="M13 9h4v4h-4z" fill="#80b030" />
        <path d="M8 14h4v4H8z" fill="#30a0c8" /><path d="M13 14h4v4h-4z" fill="#e8b030" />
      </>
    ),
  },
  {
    label: 'Mail',
    art: <><path d="M0 9l12-8 12 8v14H0z" fill="#12549c" /><path d="M2 8h20v9H2z" fill="#f4f8fc" /><path d="M0 9l12 8 12-8v14H0z" fill="#2c9cdc" /><path d="M0 23l12-9 12 9z" fill="#48b8ee" /></>,
  },
  {
    label: 'Paint',
    art: (
      <>
        <path d="M1 16C0 9 6 4 13 4c5 0 8 4 7 9s-6 10-12 9c-3-1 0-4-2-5-2-2-5 2-5-1z" fill="#d4e0e8" />
        <circle cx="6" cy="11" r="2" fill="#40a060" /><circle cx="11" cy="8" r="2" fill="#e0a030" />
        <circle cx="16" cy="10" r="2" fill="#4878d0" /><circle cx="4" cy="15" r="1.600" fill="#c03848" />
        <path d="M21 2l-6 21" stroke="#b87c48" strokeWidth="3" /><path d="M17 1l6 3-3 3z" fill="#e0b090" />
      </>
    ),
  },
  {
    label: 'Coc Coc',
    art: (
      <>
        <circle cx="12" cy="12.500" r="11.500" fill="#6cb844" />
        <circle cx="12" cy="12.500" r="6" stroke="#fff" strokeWidth="3" />
        <path d="M13 8L12 0h12v10l-7 2z" fill="#1f1e22" />
        <path d="M14 8L12 1l4 0zM16 9l0-8 4 1zM17 11l4-9 2 2zM17 12l7-8v4z" fill="#f0e0d0" stroke="#d86850" strokeWidth="0.500" />
        <circle cx="12" cy="12.500" r="3.500" fill="#a4d870" />
      </>
    ),
  },
  {
    label: 'File Explorer',
    art: <><path d="M1 3h9l2 3h11v15H1z" fill="#e8a820" /><path d="M1 7h22v14H1z" fill="#fcd462" /><path d="M5 13h14v9h-4v-4H9v4H5z" fill="#4c90bc" /></>,
  },
  {
    label: 'Matrix 8.0',
    art: (
      <>
        <circle cx="12" cy="12" r="11.500" fill="#30a8cc" />
        <path d="M1.500 10l4 8 4-8" stroke="#e4f8fc" strokeWidth="1.300" />
        <circle cx="16" cy="13.500" r="5" stroke="#e4f8fc" strokeWidth="1.300" />
        <circle cx="16" cy="5" r="3" stroke="#e4f8fc" strokeWidth="1.300" />
        <circle cx="9.500" cy="17" r="0.900" fill="#fff" />
      </>
    ),
  },
]

function Taskbar() {
  return (
    <footer className="flex h-10 shrink-0 items-stretch justify-between bg-[#1f1e22] font-['Open_Sans',sans-serif] text-[12px] text-[#f0f0f0]">
      <nav className="flex" aria-label="Taskbar">
        {TASKS.map((t) => (
          <button
            key={t.label}
            aria-label={t.label}
            className={`flex w-[49px] items-center justify-center border-b-2 ${t.label === 'Matrix 8.0' ? 'border-[#a4d4ec]' : 'border-transparent'}`}
          >
            <Icon>{t.art}</Icon>
          </button>
        ))}
      </nav>
      <div className="flex items-center">
        <button className="flex h-full items-center text-[#c8c8c8]">
          Desktop
          <svg viewBox="0 0 10 8" className="mb-5 ml-2 h-2 w-[10px]" fill="none" aria-hidden="true">
            <path d="M1 0l3 4-3 4M5 0l3 4-3 4" stroke="#fff" strokeWidth="1.4" />
          </svg>
        </button>
        <button aria-label="People" className="ml-[20px]">
          <svg viewBox="0 0 18 20" className="h-5 w-[18px]" fill="none" stroke="#eee" strokeWidth="1.3" aria-hidden="true">
            <circle cx="6" cy="9" r="2.600" /><circle cx="12" cy="5" r="2.600" /><path d="M2 17c0-7 8-7 8 0M10 10c3-2 5 0 5 4" />
          </svg>
        </button>
        <button className="ml-[60px] flex items-center gap-2 text-[13px] whitespace-nowrap">
          <svg viewBox="0 0 24 18" className="h-[17px] w-6" fill="none" stroke="#f4f4f4" strokeWidth="1.5" aria-hidden="true">
            <path d="M1 1h19v15H1zM20 5h3v11h-4M4 5h13M4 9h5v4H4zM11 9h6M11 13h6" />
          </svg>
          <span>31°C</span>
          <span>Nắng rải rác</span>
        </button>
        <div className="ml-5 flex items-center gap-2">
          <button aria-label="Show hidden icons">
            <svg viewBox="0 0 14 8" className="h-2 w-[14px]" fill="none" aria-hidden="true"><path d="M1 7l6-6 6 6" stroke="#fff" strokeWidth="1.5" /></svg>
          </button>
          <button aria-label="Network">
            <svg viewBox="0 0 18 16" className="h-4 w-[18px]" fill="none" stroke="#fff" strokeWidth="1.300" aria-hidden="true">
              <path d="M6 3h11v8H5M11 11v3M7 14.500h8M1 1h4v4H1zM3 5v9h2" />
            </svg>
          </button>
          <button aria-label="OneDrive">
            <svg viewBox="0 0 18 16" className="h-4 w-[18px]" fill="none" aria-hidden="true">
              <path d="M4 12a4 4 0 010-7c2-5 9-4 10 0 5 1 4 7 0 7z" fill="#2080c8" />
              <circle cx="12.500" cy="11" r="4.500" fill="#d8ecf8" /><path d="M10 11a2.500 2.500 0 014-2M15 11a2.500 2.500 0 01-4 2" stroke="#1868a8" strokeWidth="1.200" />
            </svg>
          </button>
          <button aria-label="Volume">
            <svg viewBox="0 0 18 16" className="h-4 w-[18px]" fill="none" stroke="#fff" strokeWidth="1.300" aria-hidden="true">
              <path d="M1 5.500h3l4-4v13l-4-4H1zM10 6c1 1 1 3 0 4M12.500 4c2 2 2 6 0 8M15 2c3 3 3 9 0 12" />
            </svg>
          </button>
          <button aria-label="Windows Ink" className="ml-[2px]">
            <svg viewBox="0 0 18 18" className="h-[18px] w-[18px]" fill="none" stroke="#f0f0f0" strokeWidth="1.300" aria-hidden="true">
              <path d="M6 12L13 1l3 2-7 11-4 2zM10 6l4 3M7 10c-5-1-7 3-5 6M13 12c1-2 3-1 3 0" />
            </svg>
          </button>
          <button aria-label="Touch keyboard" className="ml-[2px]">
            <svg viewBox="0 0 24 14" className="h-[14px] w-6" fill="none" stroke="#fff" strokeWidth="1.200" aria-hidden="true">
              <path d="M1 1h22v12H1z" /><path d="M4 4.500h16M4 7.500h16" strokeDasharray="1.500 1" /><path d="M5 10.500h14" />
            </svg>
          </button>
        </div>
        <button className="ml-[11px] flex w-[50px] flex-col items-center text-[11px] leading-[18px] whitespace-nowrap">
          <span>11:03 AM</span>
          <span>1/9/2024</span>
        </button>
        <button aria-label="Notifications" className="relative ml-[19px] flex h-full w-[28px] items-center">
          <svg viewBox="0 0 18 18" className="mb-2 h-[18px] w-[18px]" aria-hidden="true">
            <path d="M1 1h16v12H8l-4 4v-4H1z" fill="#fff" /><path d="M4 4.500h10M4 7.500h10M4 10.500h6" stroke="#222" />
          </svg>
          <span className="absolute right-[4px] bottom-[4px] flex h-4 w-4 items-center justify-center rounded-full border border-[#888] bg-[#333] text-[11px] leading-3">2</span>
        </button>
        <div className="ml-[8px] h-full w-[5px] border-l border-[#77777a]" />
      </div>
    </footer>
  )
}

export default function App() {
  return (
    <div className="flex h-screen flex-col overflow-hidden bg-[#333]">
      <header className="shrink-0 bg-white">
        <div className="flex h-[23px] items-center justify-between pl-[2px]">
          <div className="flex items-center gap-1 font-[Roboto,sans-serif] text-[12px] leading-4 text-[#8c8c8c]">
            <svg viewBox="0 0 16 16" className="h-4 w-4" fill="none" aria-hidden="true">
              <circle cx="8" cy="8" r="7.500" fill="#38a4c4" stroke="#2c7c98" />
              <path d="M2 6l3 5 2-5" stroke="#8cd4e8" /><circle cx="10" cy="9.500" r="3" stroke="#8cd4e8" /><circle cx="10" cy="4" r="2" stroke="#8cd4e8" />
            </svg>
            <h1>Matrix 8.0 (64-bit) - 6829.3dm</h1>
          </div>
          <div className="flex pr-[2px]">
            <button aria-label="Minimize" className="flex w-[46px] justify-center">
              <svg viewBox="0 0 12 12" className="h-3 w-3" fill="none"><path d="M0 6.500h12" stroke="#888" /></svg>
            </button>
            <button aria-label="Restore" className="flex w-[46px] justify-center">
              <svg viewBox="0 0 12 12" className="h-3 w-3" fill="none" stroke="#888"><path d="M1.500 3.500h7v7h-7zM3.500 3V1.500h7v7H9" /></svg>
            </button>
            <button aria-label="Close" className="flex w-[46px] justify-center">
              <svg viewBox="0 0 12 12" className="h-3 w-3" fill="none"><path d="M1 1l10 10M11 1L1 11" stroke="#888" /></svg>
            </button>
          </div>
        </div>
        <nav className="flex h-[21px] items-center gap-[11px] bg-[#e8e8e8] pl-[6px] font-[Roboto,sans-serif] text-[11px] leading-4 text-black">
          {MENUS.map((m) => (
            <button key={m} className="whitespace-nowrap">{m}</button>
          ))}
        </nav>
      </header>
      <div className="flex min-h-0 flex-1">
        <aside className="flex w-[300px] shrink-0 flex-col bg-[#333] font-[Verdana,'DejaVu_Sans',sans-serif]">
          <Snaps />
          <InfoSettings />
          <Layers />
          <MetalWeights />
          <GemReporter />
        </aside>
        <Workspace />
      </div>
      <Taskbar />
    </div>
  )
}
